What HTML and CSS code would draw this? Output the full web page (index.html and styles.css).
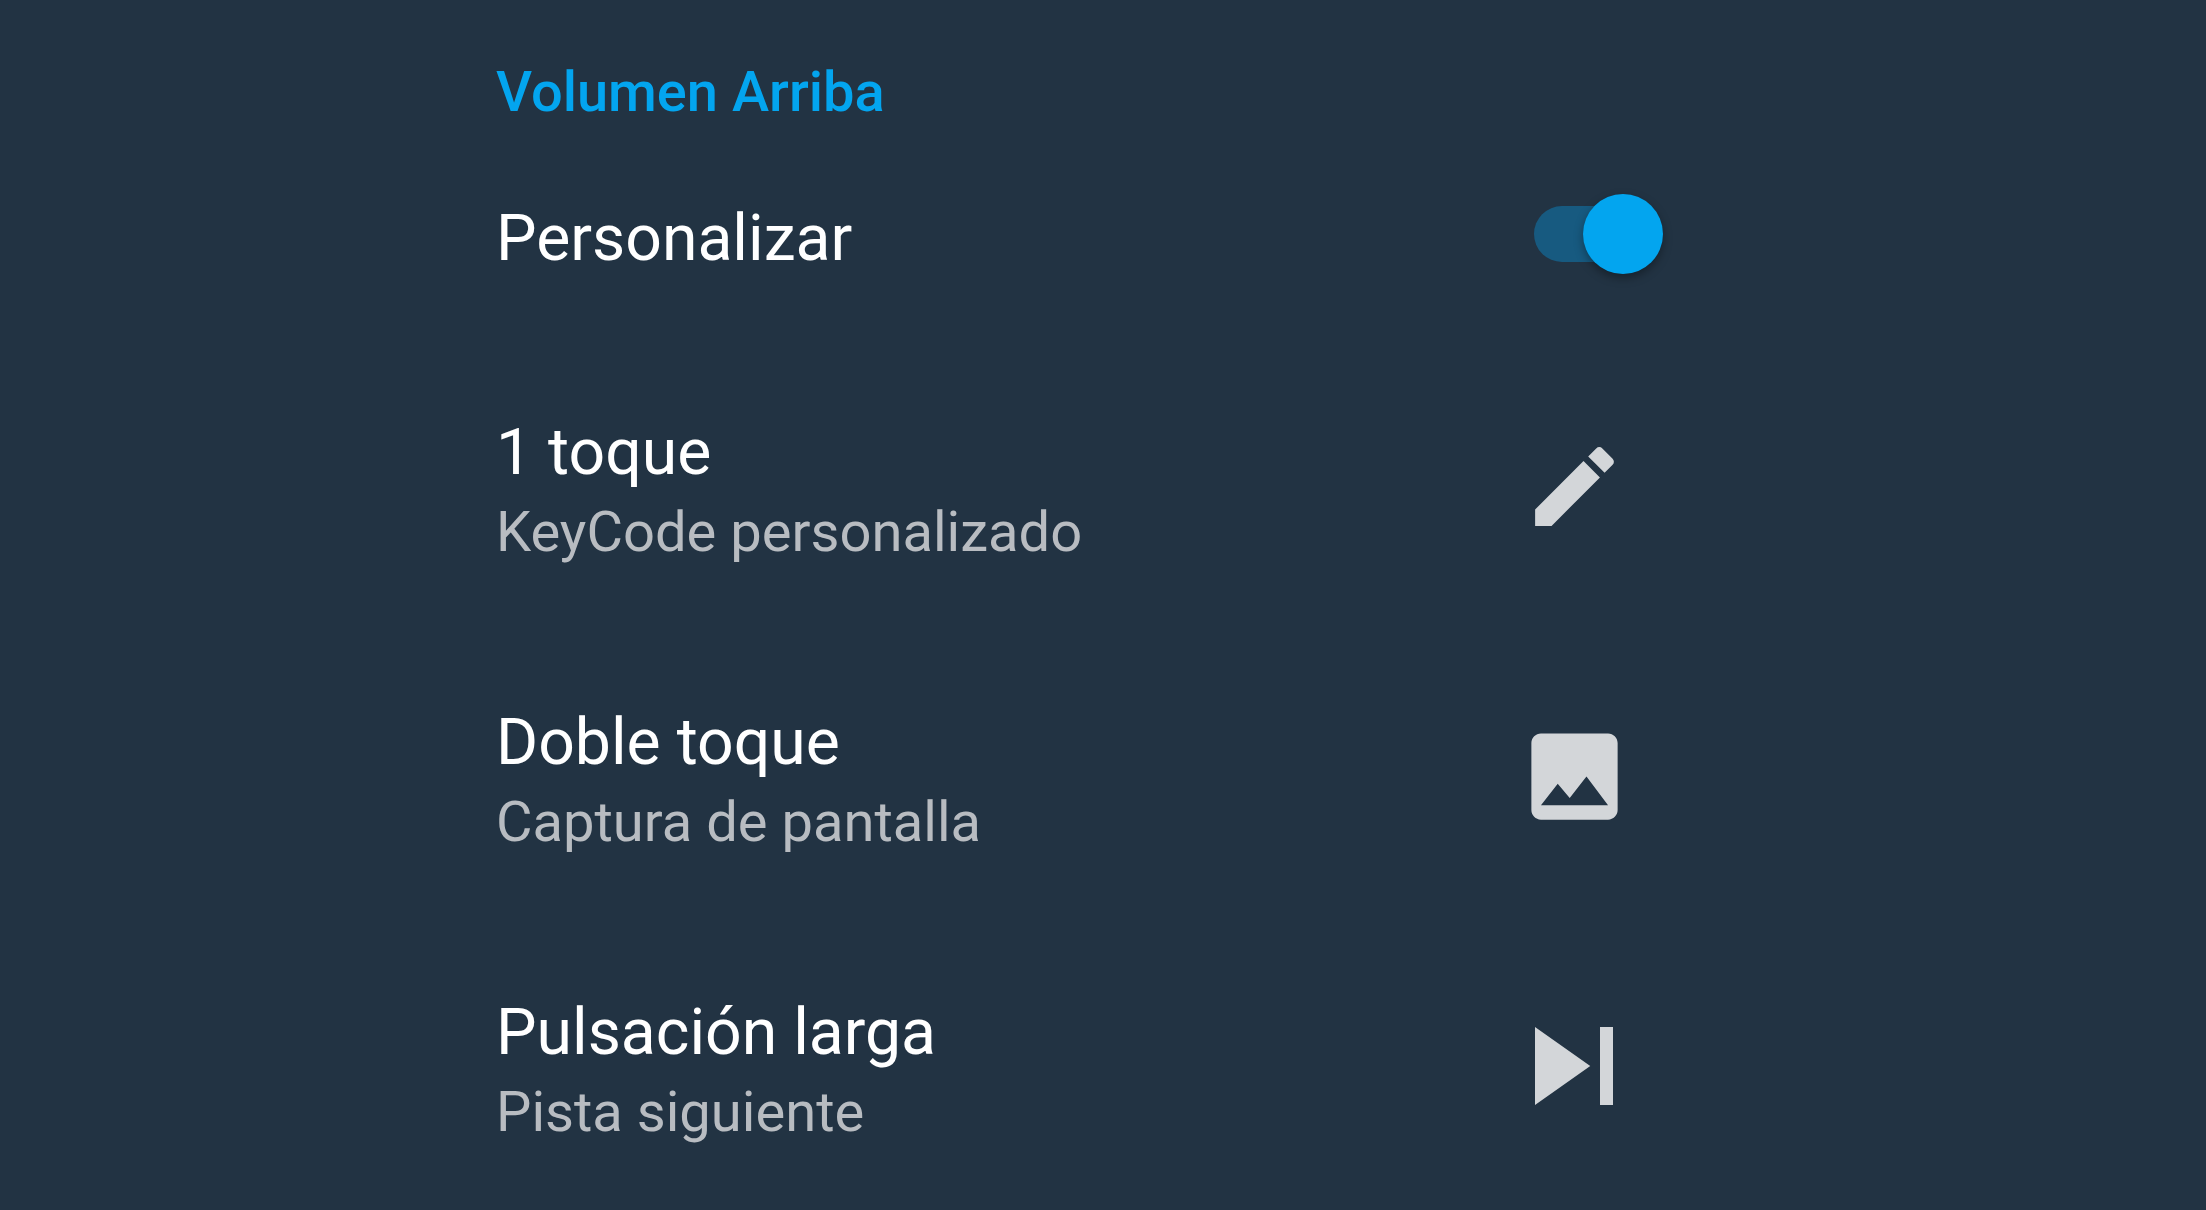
FILE: index.html
```html
<!DOCTYPE html>
<html lang="es">
<head>
<meta charset="utf-8">
<title>Volumen Arriba</title>
<link rel="stylesheet" href="styles.css">
</head>
<body>
<main class="list">
  <h2 class="heading">Volumen Arriba</h2>
  <div class="row row-switch">
    <div class="text"><div class="label">Personalizar</div></div>
    <div class="slot"><div class="track"><div class="knob"></div></div></div>
  </div>
  <div class="row">
    <div class="text"><div class="label">1 toque</div><div class="sub">KeyCode personalizado</div></div>
    <div class="slot"><svg class="icon-edit" viewBox="0 0 24 24"><path d="M3 17.25V21h3.75L17.81 9.94l-3.75-3.75L3 17.25zM20.71 7.04c.39-.39.39-1.02 0-1.41l-2.34-2.34c-.39-.39-1.02-.39-1.41 0l-1.83 1.83 3.75 3.75 1.83-1.83z"/></svg></div>
  </div>
  <div class="row">
    <div class="text"><div class="label">Doble toque</div><div class="sub">Captura de pantalla</div></div>
    <div class="slot"><svg class="icon-image" viewBox="0 0 24 24"><path d="M21 19V5c0-1.1-.9-2-2-2H5c-1.1 0-2 .9-2 2v14c0 1.1.9 2 2 2h14c1.1 0 2-.9 2-2zM8.5 13.5l2.5 3.01L14.5 12l4.5 6H5l3.5-4.5z"/></svg></div>
  </div>
  <div class="row">
    <div class="text"><div class="label">Pulsación larga</div><div class="sub">Pista siguiente</div></div>
    <div class="slot"><svg class="icon-skip" viewBox="0 0 24 24"><path d="M6 18l8.5-6L6 6v12zM16 6v12h2V6h-2z"/></svg></div>
  </div>
</main>
</body>
</html>
```
FILE: styles.css
```css
html, body {
  margin: 0;
  height: 100%;
  background: #223343;
  overflow: hidden;
}
.list {
  padding-left: 496px;
  font-family: Roboto, "Noto Sans", sans-serif;
  display: flex;
  flex-direction: column;
}
.heading {
  margin: 0;
  height: 150px;
  box-sizing: border-box;
  padding-top: 59px;
  font-size: 56px;
  line-height: 66px;
  font-weight: 500;
  color: #03a5ef;
}
.row {
  display: flex;
  align-items: center;
  height: 290px;
  flex-shrink: 0;
}
.row-switch {
  height: 191px;
  align-items: flex-start;
}
.text {
  width: 1025px;
  flex-shrink: 0;
  box-sizing: border-box;
  padding-top: 6px;
}
.row-switch .text {
  padding-top: 50px;
}
.label {
  font-size: 64.3px;
  line-height: 76px;
  color: #ffffff;
}
.sub {
  font-size: 56.1px;
  line-height: 66px;
  color: #b8bcc1;
  margin-top: 9px;
}
.slot {
  width: 106px;
  display: flex;
  justify-content: center;
  flex-shrink: 0;
}
svg {
  fill: #d3d6d9;
  flex-shrink: 0;
  display: block;
}
.icon-edit { width: 105px; height: 105px; }
.icon-image { width: 115px; height: 115px; }
.icon-skip { width: 156px; height: 156px; }
.row-switch .slot {
  justify-content: flex-start;
  padding-top: 56px;
  padding-left: 13px;
}
.track {
  position: relative;
  width: 106px;
  height: 56px;
  border-radius: 28px;
  background: #175a80;
  flex-shrink: 0;
}
.knob {
  position: absolute;
  left: 49px;
  top: -12px;
  width: 80px;
  height: 80px;
  border-radius: 50%;
  background: #03a5ef;
  box-shadow: 0 4px 10px rgba(0, 0, 0, 0.35);
}
```
